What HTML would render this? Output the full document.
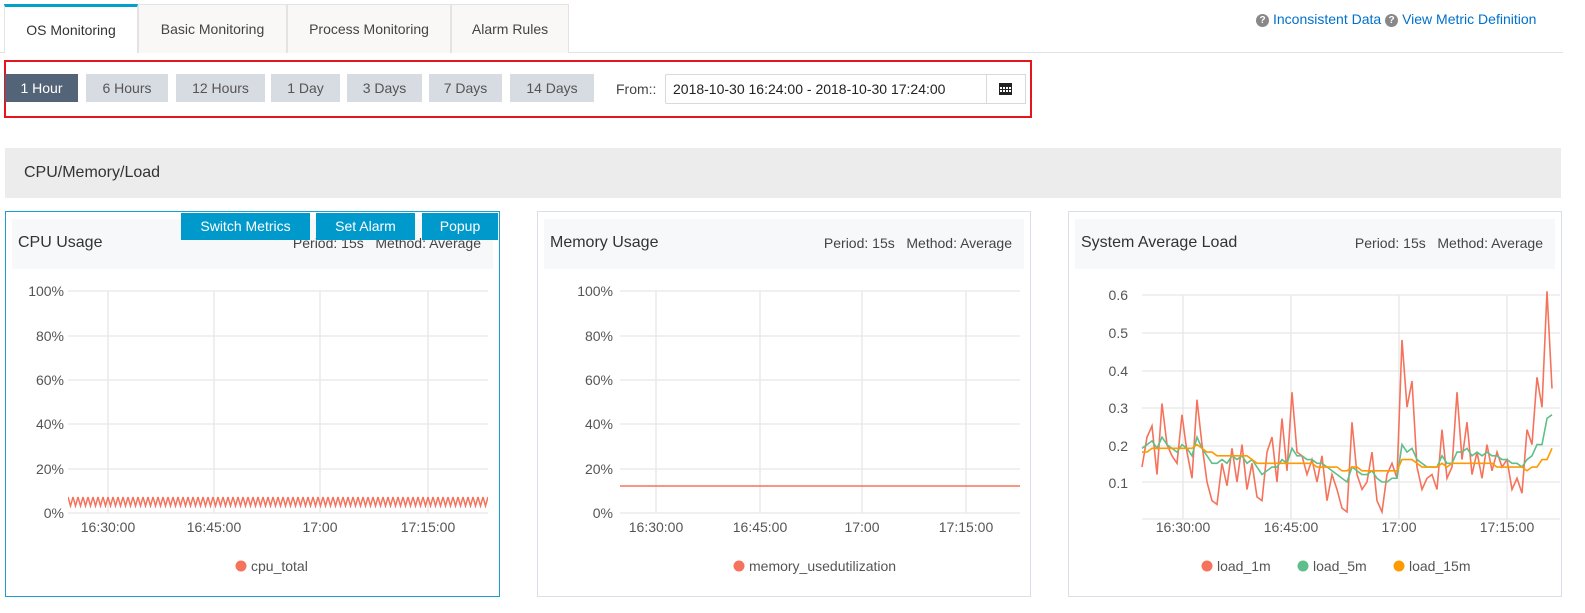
<!DOCTYPE html>
<html><head><meta charset="utf-8"><style>
*{box-sizing:border-box;margin:0;padding:0}
body{width:1585px;height:613px;background:#fff;font-family:"Liberation Sans",sans-serif;font-size:14px;color:#333;position:relative;overflow:hidden}
.a{position:absolute}
.tab{position:absolute;top:4px;height:49px;background:#f9f8f7;border:1px solid #e3e3e3;border-bottom:none;color:#444;font-size:14px;line-height:48px;text-align:center}
.btn{position:absolute;top:74px;height:28px;background:#d7dce3;color:#555;font-size:14px;line-height:28px;text-align:center}
.panel{position:absolute;top:211px;height:386px;border:1px solid #d9dee8;background:#fff}
.hdr{position:absolute;left:6px;right:6px;top:7px;height:50px;background:#f7f8fa}
.title{position:absolute;left:12px;top:22px;font-size:16px;color:#333}
.meta{position:absolute;right:18px;top:23px;font-size:14px;color:#444}
.bb{position:absolute;top:213px;height:27px;background:#0099cc;color:#fff;font-size:14px;line-height:27px;text-align:center}
.q{display:inline-block;width:13px;height:13px;border-radius:50%;background:#888;color:#fff;font-size:10px;line-height:13px;text-align:center;font-weight:bold;vertical-align:1px;margin-right:4px}
</style></head><body>
<div class="a" style="left:0;top:52px;width:1563px;height:1px;background:#e3e3e3"></div>
<div class="tab" style="left:4px;width:134px;background:#fff;border-top:3px solid #00a2ca;line-height:46px;color:#333">OS Monitoring</div>
<div class="tab" style="left:138px;width:149px">Basic Monitoring</div>
<div class="tab" style="left:287px;width:164px">Process Monitoring</div>
<div class="tab" style="left:451px;width:118px">Alarm Rules</div>
<div class="a" style="left:1256px;top:11px;font-size:14px;color:#0070cc"><span class="q">?</span>Inconsistent Data <span class="q">?</span>View Metric Definition</div>

<div class="a" style="left:4px;top:60px;width:1028px;height:58px;border:2px solid #e4161d"></div>
<div class="btn" style="left:5px;width:73px;background:#546478;color:#fff">1 Hour</div>
<div class="btn" style="left:86px;width:82px">6 Hours</div>
<div class="btn" style="left:176px;width:89px">12 Hours</div>
<div class="btn" style="left:271px;width:69px">1 Day</div>
<div class="btn" style="left:347px;width:75px">3 Days</div>
<div class="btn" style="left:429px;width:73px">7 Days</div>
<div class="btn" style="left:510px;width:84px">14 Days</div>
<div class="a" style="left:616px;top:81px;color:#444">From::</div>
<div class="a" style="left:665px;top:74px;width:322px;height:30px;border:1px solid #d9d9d9;border-radius:2px 0 0 2px;line-height:28px;padding-left:7px;color:#222">2018-10-30 16:24:00 - 2018-10-30 17:24:00</div>
<div class="a" style="left:986px;top:74px;width:40px;height:30px;border:1px solid #d9d9d9">
<svg width="40" height="30" style="position:absolute;left:-1px;top:-1px"><rect x="13" y="9" width="13" height="12" fill="#222"/><g fill="#fff"><rect x="14" y="13" width="2" height="2"/><rect x="17" y="13" width="2" height="2"/><rect x="20" y="13" width="2" height="2"/><rect x="23" y="13" width="2" height="2"/><rect x="14" y="16" width="2" height="2"/><rect x="17" y="16" width="2" height="2"/><rect x="20" y="16" width="2" height="2"/><rect x="23" y="16" width="2" height="2"/></g></svg></div>

<div class="a" style="left:5px;top:148px;width:1556px;height:50px;background:#ececec"></div>
<div class="a" style="left:24px;top:164px;font-size:16px;color:#333">CPU/Memory/Load</div>

<div class="panel" style="left:5px;width:495px;border-color:#1a9fd0"><div class="hdr"></div><div class="title">CPU Usage</div><div class="meta">Period: 15s&nbsp;&nbsp; Method: Average</div></div>
<div class="bb" style="left:181px;width:129px">Switch Metrics</div>
<div class="bb" style="left:316px;width:99px">Set Alarm</div>
<div class="bb" style="left:422px;width:76px">Popup</div>
<div class="panel" style="left:537px;width:494px"><div class="hdr"></div><div class="title">Memory Usage</div><div class="meta">Period: 15s&nbsp;&nbsp; Method: Average</div></div>
<div class="panel" style="left:1068px;width:494px"><div class="hdr"></div><div class="title">System Average Load</div><div class="meta">Period: 15s&nbsp;&nbsp; Method: Average</div></div>

<svg class="a" style="left:0;top:0" width="1585" height="613">
<defs><pattern id="zz" x="68" y="495" width="5" height="13" patternUnits="userSpaceOnUse"><path d="M0 2 L2.5 11 L5 2" fill="none" stroke="#f5735c" stroke-width="1.5"/></pattern></defs>
<g stroke="#e6e6e6" stroke-width="1.3">
<line x1="68" y1="291" x2="488" y2="291"/><line x1="68" y1="336" x2="488" y2="336"/><line x1="68" y1="380" x2="488" y2="380"/><line x1="68" y1="424" x2="488" y2="424"/><line x1="68" y1="469" x2="488" y2="469"/><line x1="68" y1="513" x2="488" y2="513"/>
<line x1="108" y1="291" x2="108" y2="513"/><line x1="214" y1="291" x2="214" y2="513"/><line x1="320" y1="291" x2="320" y2="513"/><line x1="428" y1="291" x2="428" y2="513"/>
<line x1="620" y1="291" x2="1020" y2="291"/><line x1="620" y1="336" x2="1020" y2="336"/><line x1="620" y1="380" x2="1020" y2="380"/><line x1="620" y1="424" x2="1020" y2="424"/><line x1="620" y1="469" x2="1020" y2="469"/><line x1="620" y1="513" x2="1020" y2="513"/>
<line x1="656" y1="291" x2="656" y2="513"/><line x1="760" y1="291" x2="760" y2="513"/><line x1="862" y1="291" x2="862" y2="513"/><line x1="966" y1="291" x2="966" y2="513"/>
<line x1="1142" y1="295" x2="1560" y2="295"/><line x1="1142" y1="333" x2="1560" y2="333"/><line x1="1142" y1="371" x2="1560" y2="371"/><line x1="1142" y1="408" x2="1560" y2="408"/><line x1="1142" y1="446" x2="1560" y2="446"/><line x1="1142" y1="482" x2="1560" y2="482"/><line x1="1142" y1="519" x2="1560" y2="519"/>
<line x1="1183" y1="295" x2="1183" y2="519"/><line x1="1291" y1="295" x2="1291" y2="519"/><line x1="1399" y1="295" x2="1399" y2="519"/><line x1="1507" y1="295" x2="1507" y2="519"/>
</g>
<rect x="68" y="495" width="420" height="13" fill="url(#zz)"/>
<line x1="620" y1="486" x2="1020" y2="486" stroke="#f5735c" stroke-width="1.5"/>
<g transform="translate(1142,519.4) scale(5,-374)" fill="none" stroke-width="1.6">
<polyline vector-effect="non-scaling-stroke" stroke="#f5735c" points="0,.14 1,.22 2,.25 3,.12 4,.31 5,.2 6,.17 7,.15 8,.28 9,.18 10,.11 11,.32 12,.2 13,.1 14,.05 15,.04 16,.15 17,.09 18,.19 19,.1 20,.2 21,.08 22,.15 23,.06 24,.05 25,.18 26,.22 27,.1 28,.27 29,.13 30,.34 31,.18 32,.17 33,.12 34,.16 35,.1 36,.17 37,.05 38,.12 39,.08 40,.03 41,.02 42,.26 43,.12 44,.08 45,.1 46,.18 47,.05 48,.02 49,.12 50,.15 51,.11 52,.48 53,.3 54,.37 55,.14 56,.08 57,.11 58,.12 59,.08 60,.24 61,.11 62,.14 63,.34 64,.16 65,.26 66,.12 67,.18 68,.11 69,.2 70,.13 71,.18 72,.14 73,.16 74,.08 75,.11 76,.07 77,.24 78,.2 79,.38 80,.3 81,.61 82,.35"/>
<polyline vector-effect="non-scaling-stroke" stroke="#5fbf8a" points="0,.19 1,.2 2,.21 3,.19 4,.22 5,.2 6,.19 7,.18 8,.2 9,.19 10,.17 11,.22 12,.19 13,.17 14,.15 15,.15 16,.16 17,.15 18,.17 19,.16 20,.17 21,.15 22,.16 23,.14 24,.12 25,.13 26,.14 27,.14 28,.16 29,.15 30,.19 31,.17 32,.17 33,.16 34,.16 35,.15 36,.15 37,.14 38,.13 39,.12 40,.11 41,.1 42,.14 43,.13 44,.12 45,.12 46,.13 47,.11 48,.1 49,.1 50,.11 51,.11 52,.2 53,.18 54,.19 55,.16 56,.15 57,.14 58,.14 59,.14 60,.17 61,.15 62,.15 63,.18 64,.18 65,.19 66,.17 67,.18 68,.17 69,.18 70,.17 71,.17 72,.16 73,.16 74,.15 75,.15 76,.14 77,.16 78,.17 79,.2 80,.2 81,.27 82,.28"/>
<polyline vector-effect="non-scaling-stroke" stroke="#ff9a00" points="0,.18 1,.18 2,.19 3,.19 4,.19 5,.19 6,.19 7,.19 8,.19 9,.19 10,.19 11,.2 12,.19 13,.18 14,.18 15,.17 16,.17 17,.17 18,.17 19,.17 20,.17 21,.17 22,.16 23,.15 24,.15 25,.15 26,.15 27,.15 28,.15 29,.15 30,.15 31,.15 32,.15 33,.15 34,.15 35,.14 36,.14 37,.14 38,.14 39,.14 40,.13 41,.13 42,.14 43,.14 44,.13 45,.13 46,.13 47,.13 48,.13 49,.13 50,.13 51,.13 52,.16 53,.16 54,.16 55,.15 56,.14 57,.14 58,.14 59,.14 60,.15 61,.14 62,.15 63,.15 64,.15 65,.15 66,.15 67,.15 68,.15 69,.15 70,.15 71,.14 72,.14 73,.14 74,.14 75,.14 76,.14 77,.13 78,.14 79,.14 80,.16 81,.16 82,.19"/>
</g>
<g fill="#f5735c"><circle cx="241" cy="566" r="5.5"/><circle cx="739" cy="566" r="5.5"/><circle cx="1207" cy="566" r="5.5"/></g>
<circle cx="1303" cy="566" r="5.5" fill="#5fbf8a"/><circle cx="1399" cy="566" r="5.5" fill="#ff9a00"/>
<g font-family="Liberation Sans, sans-serif" font-size="14" fill="#555">
<g text-anchor="end"><text x="64" y="296">100%</text><text x="64" y="341">80%</text><text x="64" y="385">60%</text><text x="64" y="429">40%</text><text x="64" y="474">20%</text><text x="64" y="518">0%</text>
<text x="613" y="296">100%</text><text x="613" y="341">80%</text><text x="613" y="385">60%</text><text x="613" y="429">40%</text><text x="613" y="474">20%</text><text x="613" y="518">0%</text>
<text x="1128" y="300">0.6</text><text x="1128" y="338">0.5</text><text x="1128" y="376">0.4</text><text x="1128" y="413">0.3</text><text x="1128" y="451">0.2</text><text x="1128" y="488">0.1</text></g>
<g text-anchor="middle"><text x="108" y="532">16:30:00</text><text x="214" y="532">16:45:00</text><text x="320" y="532">17:00</text><text x="428" y="532">17:15:00</text>
<text x="656" y="532">16:30:00</text><text x="760" y="532">16:45:00</text><text x="862" y="532">17:00</text><text x="966" y="532">17:15:00</text>
<text x="1183" y="532">16:30:00</text><text x="1291" y="532">16:45:00</text><text x="1399" y="532">17:00</text><text x="1507" y="532">17:15:00</text></g>
<text x="251" y="571">cpu_total</text><text x="749" y="571">memory_usedutilization</text><text x="1217" y="571">load_1m</text><text x="1313" y="571">load_5m</text><text x="1409" y="571">load_15m</text>
</g>
</svg>
</body></html>
